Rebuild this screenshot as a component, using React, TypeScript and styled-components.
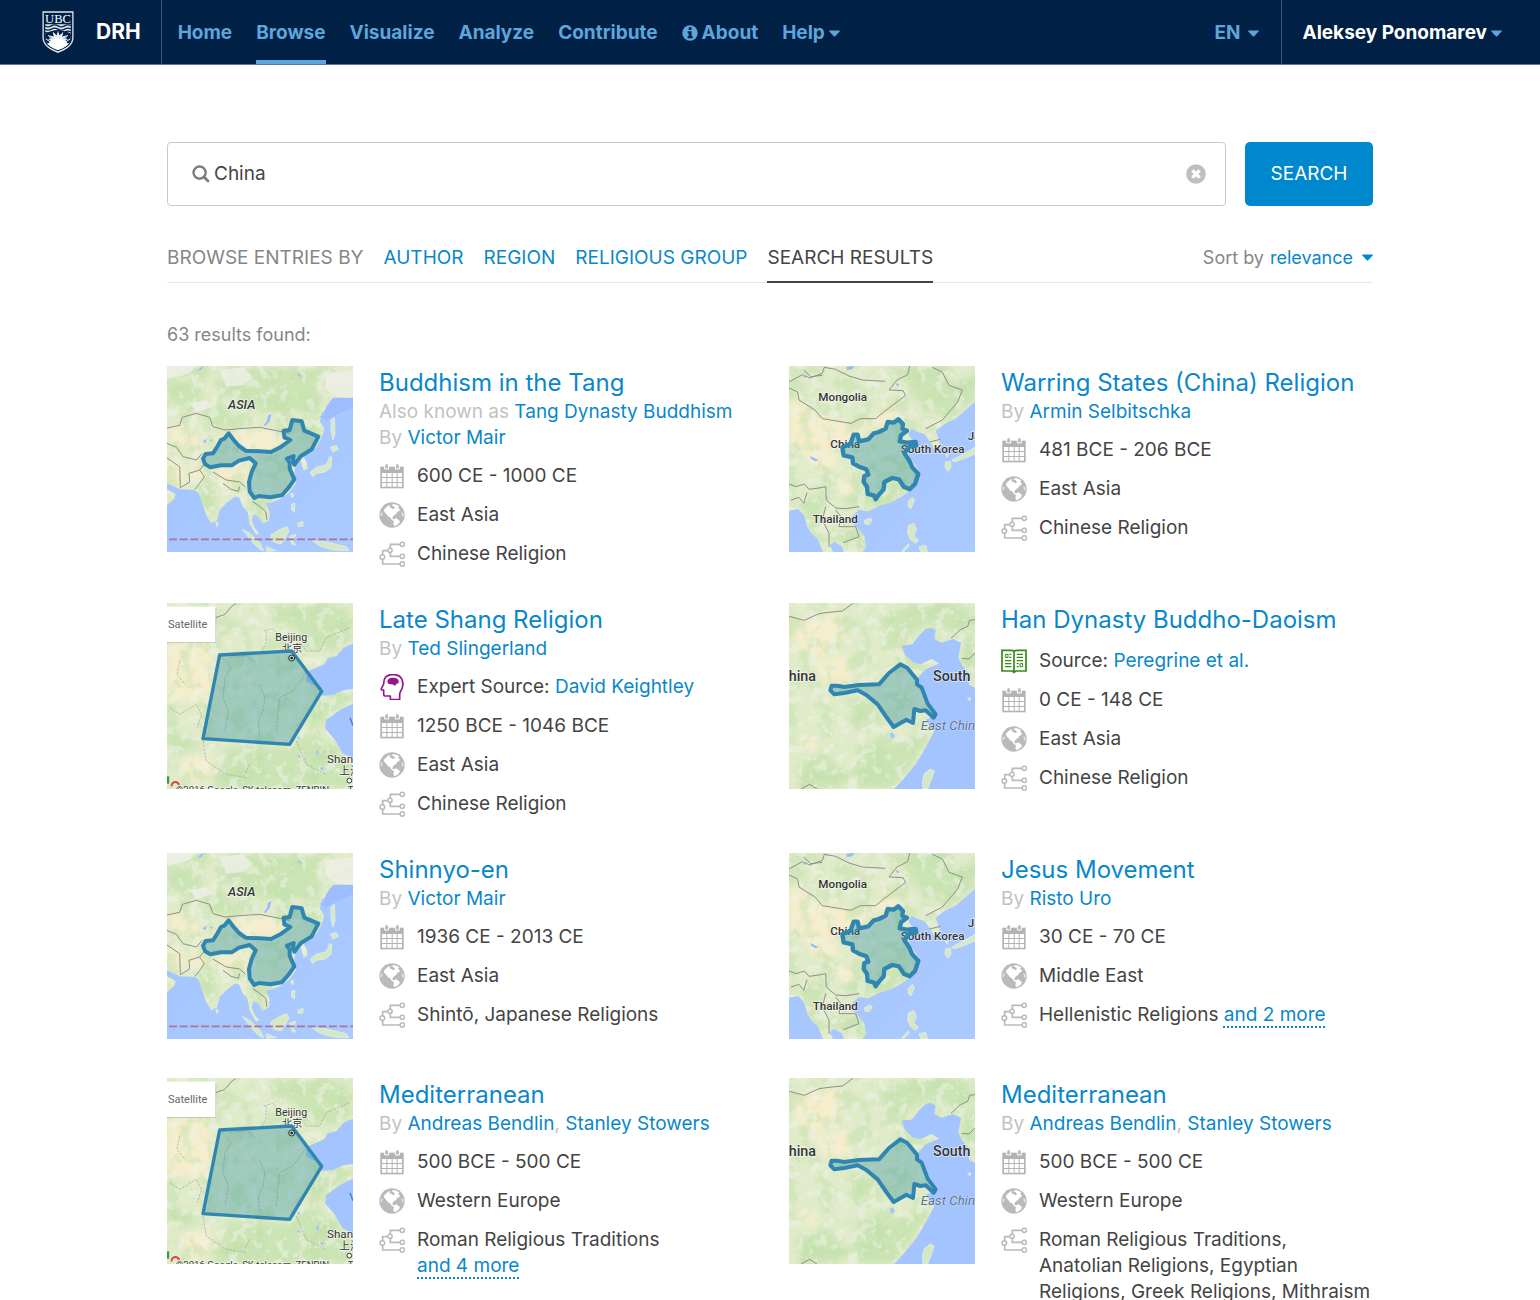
import React, { useId, useState } from "react";
import styled, { createGlobalStyle } from "styled-components";

const c = {
  navy: "#002145",
  sky: "#5ea5dc",
  link: "#0a87ca",
  button: "#0088ce",
  text: "#444444",
  muted: "#868686",
  faint: "#c2c2c2",
  icon: "#bababa",
  line: "#e6e6e6",
};

const GlobalStyle = createGlobalStyle`
  *, *::before, *::after { box-sizing: border-box; }
  body {
    margin: 0;
    background: #fff;
    color: ${c.text};
    font-family: Inter, "Liberation Sans", sans-serif;
    font-size: 19px;
    line-height: 26px;
  }
  a { color: ${c.link}; text-decoration: none; }
  button, input, select { font: inherit; }
  svg { display: block; flex: none; }
`;

/* ---------- header ---------- */

const Header = styled.header`
  display: flex;
  height: 65px;
  background: ${c.navy};
  border-bottom: 1px solid #5f7690;
  font-weight: 700;
`;

const Brand = styled.a`
  display: flex;
  align-items: center;
  gap: 22px;
  padding: 0 20px 0 42px;
  border-right: 1px solid #2a5a86;
  color: #fff;
  font-size: 21px;
`;

const Nav = styled.nav`
  display: flex;
  gap: 24px;
  padding-left: 16px;
`;

const NavLink = styled.a<{ $active?: boolean }>`
  display: flex;
  align-items: center;
  gap: 4px;
  padding-top: 6px;
  border-bottom: 4px solid ${(p) => (p.$active ? c.sky : "transparent")};
  color: ${c.sky};
`;

const MenuButton = styled.button<{ $light?: boolean }>`
  display: flex;
  align-items: center;
  gap: 4px;
  padding: 2px 0 0;
  border: 0;
  background: none;
  color: ${(p) => (p.$light ? "#fff" : c.sky)};
  cursor: pointer;
`;

const HeaderEnd = styled.div`
  display: flex;
  margin-left: auto;
`;

const Language = styled.label`
  display: flex;
  align-items: center;
  gap: 8px;
  padding: 2px 22px 0 0;
  color: ${c.sky};
`;

const Account = styled.div`
  display: flex;
  padding: 0 38px 0 20px;
  border-left: 1px solid #2a5a86;
`;

const PlainSelect = styled.select`
  appearance: none;
  field-sizing: content;
  padding: 0;
  border: 0;
  background: none;
  color: inherit;
  cursor: pointer;
`;

/* ---------- search and tabs ---------- */

const Page = styled.main`
  max-width: 1246px;
  margin: 0 auto;
  padding: 77px 20px 0;
`;

const SearchForm = styled.form`
  display: flex;
  gap: 19px;
`;

const SearchBox = styled.div`
  display: flex;
  flex: 1;
  align-items: center;
  gap: 4px;
  height: 64px;
  padding: 0 19px 0 24px;
  border: 1px solid #c9c9c9;
  border-radius: 4px;
`;

const SearchInput = styled.input`
  flex: 1;
  min-width: 0;
  padding: 0;
  border: 0;
  outline: 0;
  background: none;
  color: ${c.text};
`;

const ClearButton = styled.button`
  padding: 0;
  border: 0;
  background: none;
  cursor: pointer;
`;

const SearchButton = styled.button`
  width: 128px;
  border: 0;
  border-radius: 5px;
  background: ${c.button};
  color: #fff;
  cursor: pointer;
`;

const Tabs = styled.nav`
  display: flex;
  gap: 20px;
  height: 51px;
  margin-top: 26px;
  box-shadow: inset 0 -1px ${c.line};
  color: ${c.muted};
  line-height: 51px;
  text-transform: uppercase;
`;

const Tab = styled.a<{ $active?: boolean }>`
  color: ${(p) => (p.$active ? c.text : c.link)};
  box-shadow: ${(p) => (p.$active ? `inset 0 -2px ${c.text}` : "none")};
`;

const Sort = styled.label`
  display: flex;
  align-items: center;
  gap: 6px;
  margin-left: auto;
  color: ${c.muted};
  font-size: 18px;
  text-transform: none;
`;

const SortValue = styled.span`
  display: flex;
  align-items: center;
  gap: 9px;
  color: ${c.link};
`;

/* ---------- results ---------- */

const Count = styled.p`
  margin: 39px 0 18px;
  color: ${c.muted};
  font-size: 18px;
`;

const Results = styled.div`
  display: grid;
  grid-template-columns: repeat(2, minmax(0, 1fr));
  gap: 36px 38px;
`;

const Entry = styled.article`
  display: grid;
  grid-template-columns: 186px minmax(0, 1fr);
  align-items: start;
  gap: 26px;
  min-height: 189px;
`;

const Title = styled.h2`
  margin: 0;
  font-size: 24px;
  font-weight: 400;
  line-height: 33px;
`;

const Byline = styled.p`
  margin: 0;
  color: ${c.faint};
`;

const Facts = styled.ul`
  display: grid;
  gap: 13px;
  margin: 12px 0 0;
  padding: 0;
  list-style: none;
`;

const Fact = styled.li`
  display: flex;
  gap: 12px;
`;

const More = styled.a`
  text-decoration: underline dotted 2px;
  text-underline-offset: 5px;
  white-space: nowrap;
`;

/* ---------- icons ---------- */

const Caret = ({ color = c.sky }: { color?: string }) => (
  <svg width="11" height="7" viewBox="0 0 11 7" aria-hidden="true">
    <path d="M0.6 0.4H10.4Q11.2 0.6 10.6 1.4L6.2 6.2Q5.5 6.9 4.8 6.2L0.4 1.4Q-0.2 0.6 0.6 0.4Z" fill={color} />
  </svg>
);

const Shield = () => (
  <svg width="32" height="42" viewBox="126 35 96 127" aria-hidden="true">
    <path d="M127 36H221V117C221 139 197 154 174 162C151 154 127 139 127 117Z" fill="#dfe6ee" />
    <path d="M131 40H217V117C217 137 195 150 174 157C153 150 131 137 131 117Z" fill={c.navy} />
    <path d="M135 75H213V117C213 134 193 147 174 153C155 147 135 134 135 117Z" fill="#dfe6ee" />
    <text x="174" y="71" textAnchor="middle" fontFamily="Liberation Serif, serif" fontWeight="400" fontSize="38" fill="#fff">UBC</text>
    <g fill="none" stroke={c.navy} strokeWidth="4">
      <path d="M134 80Q144 86 154 80T174 80T194 80T214 80" />
      <path d="M134 90Q144 96 154 90T174 90T194 90T214 90" />
      <path d="M134 99Q144 105 154 99T174 99T194 99T214 99" />
    </g>
    <path d="M135 103L148 98L174 92L200 98L213 103V124L204 136L197 124L205 120L193 118L201 108L186 112L188 99L178 108L174 97L170 108L160 99L162 112L147 108L155 118L143 120L151 124L144 136L135 124Z" fill={c.navy} />
    <g stroke="#fff" strokeWidth="3" strokeLinecap="round">
      <path d="M174 124V98M167 124L160 101M181 124L188 101M160 127L145 109M188 127L203 109M156 132L138 120M192 132L210 120" />
    </g>
    <path d="M140 132Q150 134 154 124Q160 127 163 118Q170 122 174 115Q178 122 185 118Q188 127 194 124Q198 134 208 132Q198 146 174 153Q150 146 140 132Z" fill="#fff" />
  </svg>
);

const InfoIcon = () => (
  <svg width="16" height="16" viewBox="0 0 16 16" aria-hidden="true">
    <circle cx="8" cy="8" r="7.7" fill={c.sky} />
    <path d="M6.7 2.3H9.5V4.9H6.7ZM5.6 6.2H9.6V11.2H10.7V13.2H5.6V11.2H6.7V8.2H5.6Z" fill={c.navy} />
  </svg>
);

const SearchIcon = () => (
  <svg width="18" height="18" viewBox="0 0 18 18" fill="none" stroke="#7c7c7c" strokeWidth="2.4" aria-hidden="true">
    <circle cx="7.6" cy="7.6" r="6.1" />
    <path d="M12 12L16 16" strokeLinecap="round" strokeWidth="2.8" />
  </svg>
);

const ClearIcon = () => (
  <svg width="20" height="20" viewBox="0 0 20 20" aria-hidden="true">
    <circle cx="10" cy="10" r="9.8" fill="#bfbfbf" />
    <path d="M6.4 6.4L13.6 13.6M13.6 6.4L6.4 13.6" stroke="#fff" strokeWidth="3.4" />
  </svg>
);

type IconName = "date" | "region" | "group" | "expert" | "book";

const drawings: Record<IconName, React.ReactNode> = {
  date: (
    <g>
      <path d="M4 11H74V76H4Z" fill="#b3b3b3" />
      <path d="M9 30H22V42H9ZM25 30H38V42H25ZM41 30H53V42H41ZM56 30H69V42H56ZM9 45H22V57H9ZM25 45H38V57H25ZM41 45H53V57H41ZM56 45H69V57H56ZM9 60H22V71H9ZM25 60H38V71H25ZM41 60H53V71H41ZM56 60H69V71H56Z" fill="#fff" />
      <path d="M17 18V9Q17 2 23 2T29 9V18ZM49 18V9Q49 2 55 2T61 9V18Z" fill={c.icon} stroke="#fff" strokeWidth="3" />
    </g>
  ),
  region: (
    <g>
      <circle cx="39" cy="39" r="38" fill={c.icon} />
      <path d="M37 10L44 6L52 8L61 13L57 18L63 22L60 28L54 30L52 36L47 38L42 43L40 51L45 52L52 49L58 53L63 58L60 64L54 69L46 73L43 66L45 58L38 53L33 46L27 43L22 36L17 31L14 24L20 18L27 11L33 9L31 16L38 18L43 22L48 18L44 13Z" fill="#fff" />
      <path d="M6 31L11 34L9 41L4 43ZM67 30L73 34L74 44L69 42Z" fill="#fff" opacity=".6" />
    </g>
  ),
  group: (
    <g fill="none" stroke={c.icon} strokeWidth="5">
      <path d="M63 10H34V22M26 29H11V41M34 35V46H63M11 55V69H63" />
      <g fill="#fff" strokeWidth="4.5">
        <circle cx="70" cy="10" r="6.5" />
        <circle cx="33" cy="28" r="6.5" />
        <circle cx="70" cy="46" r="6.5" />
        <circle cx="10" cy="48" r="7" />
        <circle cx="70" cy="69" r="6.5" />
      </g>
    </g>
  ),
  expert: (
    <g>
      <path d="M34 77V66H18Q14 66 14 61V48H8Q6 47 7 44L14 30Q13 2 42 1Q71 2 72 30Q72 41 64 53L62 60V77Z" fill="none" stroke="#93168f" strokeWidth="5" strokeLinejoin="round" />
      <path d="M25 22Q27 11 40 11Q56 10 59 20Q61 29 51 30L49 36Q43 30 34 31Q25 31 25 22Z" fill="#93168f" />
    </g>
  ),
  book: (
    <g fill="none" stroke="#338a12" strokeWidth="5">
      <path d="M39 9Q36 7 30 7H3V69H34L39 73L44 69H75V7H48Q42 7 39 9V71" />
      <path d="M13 19H21V28H13ZM57 47H65V56H57Z" strokeWidth="3" />
      <path d="M25 19H31M25 28H31M12 38H31M12 47H31M12 56H31M47 19H66M47 28H66M47 38H66M47 47H53M47 56H53" strokeWidth="4" />
    </g>
  ),
};

const FactIcon = ({ name }: { name: IconName }) => (
  <svg width="26" height="26" viewBox="0 0 78 78" aria-hidden="true">{drawings[name]}</svg>
);

/* ---------- map thumbnails ---------- */

type MapArt = {
  label: string;
  box: string;
  land: string;
  extraLand?: string;
  water?: string;
  greens: string;
  tans: string;
  borders: string;
  under?: React.ReactNode;
  shape: string;
  width: number;
  over?: React.ReactNode;
};

const mapText = {
  fontFamily: "Roboto, sans-serif",
  fontWeight: 500,
  fontSize: 35,
  fill: "#333",
  stroke: "#fff",
  strokeWidth: 4,
  strokeOpacity: 0.7,
  paintOrder: "stroke",
} as const;

const maps: Record<"asia" | "china" | "north" | "east", MapArt> = {
  asia: {
    label: "Map of Asia",
    box: "22 18 558 558",
    land: "M22 18H580V118L545 112L525 116L510 125L500 145L486 160L480 185L494 205L486 232L470 262L450 275L430 288L440 305L444 325L432 332L424 302L408 314L404 340L408 370L388 398L365 415L335 428L318 430L330 455L328 480L310 492L297 470L282 462L276 480L286 505L298 520L290 524L270 492L264 455L250 440L238 412L225 410L200 430L180 450L172 480L155 490L140 465L128 430L118 400L105 390L60 388L45 380L22 370ZM22 388L48 402L44 416L22 436Z",
    extraLand: "M452 336L470 322L500 314L510 290L516 292L514 322L496 336L470 340L458 350ZM512 262L530 256L536 268L520 276ZM514 180L524 172L526 220L520 240L514 214ZM394 400L402 402L400 412L394 410ZM396 432L406 430L404 456L396 450ZM414 490L430 484L430 498L416 500ZM334 524L362 508L382 500L388 512L376 536L364 552L342 546L334 538ZM248 508L270 520L300 548L312 572L298 566L276 544ZM390 528L410 522L400 540L408 556L396 552ZM458 542L500 546L560 560L568 572L520 570L480 558ZM320 560L350 572L320 574ZM168 486L176 490L172 500Z",
    greens: "M30 80L110 64L130 110L90 150L40 130ZM210 22L320 20L470 30L480 110L470 160L420 150L380 180L330 140L290 150L200 100ZM130 160L200 130L230 190L150 210ZM430 180L480 170L476 240L430 230ZM110 400L160 390L170 440L150 480L130 440ZM270 420L320 420L310 450L280 455ZM60 30L160 22L150 50L80 60Z",
    tans: "M22 270L60 300L80 350L60 386L22 370ZM100 300L150 330L130 365L90 360ZM210 210L300 206L390 220L370 245L330 275L250 270ZM150 330L270 320L260 370L190 368ZM22 200L90 210L130 250L110 270L40 250ZM22 390L44 402L40 416L22 430Z",
    borders: "M22 204L60 196L68 172L110 160L150 172L160 200L196 210L240 206L300 202L350 212L390 220M22 250L50 262L70 290L110 300L128 280M22 294L60 320L62 380M60 384L90 366L88 340L120 330L134 312M120 330L134 350L120 370L106 388M160 336L200 360L240 366L256 380M190 370L214 388L236 394L240 380M278 424L296 436L318 454L322 480",
    under: (
      <g>
        <path d="M22 18H110L90 40L22 56ZM180 30L250 22L280 50L250 76L200 80ZM500 40L580 30V112L520 108L496 80ZM90 130L140 120L160 140L110 156Z" fill="#efefe8" opacity=".8" />
        <path d="M312 196L320 186L326 166L336 162L330 184L318 198ZM112 32L124 22L132 18L126 30ZM128 244L142 236L138 250ZM150 240L160 238L156 246ZM478 170L492 166L500 140L520 114H580V140L500 180ZM414 44L420 40L426 54Z" fill="#9dbdff" />
        <path d="M28 538H580" stroke="#a8779b" strokeWidth="5" strokeDasharray="24 8" />
        <text {...mapText} x="205" y="148" fontSize="38" fontStyle="italic">ASIA</text>
      </g>
    ),
    shape: "M130 296L138 282L160 280L174 258L184 240L194 236L207 220L222 240L238 258L258 272L300 274L334 276L362 262L392 240L374 232L372 212L390 210L398 180L426 184L434 212L476 230L456 268L424 288L404 314L400 300L402 288L382 296L390 308L390 326L404 358L386 384L366 406L332 412L298 408L284 414L270 394L268 366L276 336L288 310L270 294L238 302L216 316L184 316L152 322L136 312Z",
    width: 12,
  },
  china: {
    label: "Map of China and its neighbours",
    box: "30 18 558 558",
    land: "M30 18H588V125L560 150L530 176L500 190L470 212L480 240L485 262L466 268L452 244L436 222L415 215L398 206L388 222L405 250L385 270L392 292L418 330L420 355L402 385L375 405L340 425L300 437L268 454L240 450L222 465L212 482L236 505L256 530L262 560L250 576H195L188 558L165 545L152 556L162 576H132L115 535L100 524L85 500L75 465L58 446L30 452Z",
    extraLand: "M256 482L272 474L280 480L270 494L258 492ZM388 424L400 412L406 420L396 446L388 440ZM388 498L404 490L412 508L404 528L418 540L410 550L394 538L386 518ZM420 560L440 556L446 576H426ZM368 572L388 552L390 558L374 576ZM500 306L514 304L516 322L506 334L498 322ZM518 300L550 284L588 262V282L550 298L524 306ZM500 282L508 284L504 292Z",
    greens: "M330 18L500 18L510 60L550 90L500 130L440 140L400 110L380 60ZM470 110L588 40V120L540 160L490 180ZM180 410L300 380L380 350L412 350L380 400L300 432L220 440ZM60 420L140 400L120 480L110 520L80 470ZM190 500L230 510L250 560L210 570ZM440 190L470 180L460 220ZM30 26L140 20L90 44L40 50Z",
    tans: "M30 110L120 170L220 190L310 160L330 190L240 220L190 260L120 280L30 250ZM60 270L170 280L180 330L110 330ZM300 130L340 120L360 170L320 180ZM170 370L210 350L230 390L190 410Z",
    borders: "M30 66L70 44L92 54L130 40L136 22L170 28L210 48L250 60L318 64M30 84L56 96L60 120L108 150L130 176L216 190L244 176L290 176L314 156L380 106L372 92L330 90L354 60L386 44L392 18M460 22L490 36L510 76L550 90L536 126L490 180L440 206M452 246L484 238M30 372L52 380L76 372L90 388L120 384L140 380L142 420L170 444L200 446L240 440M36 420L60 412L74 430L84 398M140 440L130 480L150 520L150 560M170 450L186 470L180 500L230 500L240 530L192 548M74 30L96 50L130 46",
    under: (
      <g>
        <path d="M202 20L226 18L220 28L204 30ZM70 46L84 46L78 54ZM350 70L360 72L356 80ZM94 288L118 300L110 304L96 296Z" fill="#94b9fa" />
        <text {...mapText} x="118" y="122">Mongolia</text>
        <text {...mapText} x="154" y="263">China</text>
        <text {...mapText} x="365" y="280">South Korea</text>
        <text {...mapText} x="566" y="239">Japan</text>
        <text {...mapText} x="101" y="488">Thailand</text>
      </g>
    ),
    shape: "M190 262L214 252L224 224L236 224L240 244L268 238L284 220L300 216L320 206L326 186L344 188L358 178L372 192L370 206L384 212L366 226L362 244L384 248L410 246L412 256L392 260L376 280L390 300L400 322L418 342L408 372L392 388L374 380L360 358L340 354L316 366L314 388L298 406L290 418L284 406L266 402L264 380L254 366L256 348L268 344L262 328L240 320L222 310L220 292L194 286Z",
    width: 13,
  },
  north: {
    label: "Map of northern China",
    box: "22 16 558 558",
    land: "M22 16H580V574H22Z",
    water: "M580 138L552 150L530 176L505 182L494 200L466 212L440 222L440 252L468 266L488 294L520 292L550 278L580 274ZM580 318L546 334L500 366L496 392L526 426L548 466L580 484ZM466 462L478 458L476 474ZM410 476L420 472L424 482ZM412 420L420 416L420 428ZM480 510L492 508L488 520Z",
    greens: "M340 20L560 30L580 130L520 160L440 140L400 90L340 70ZM520 290L580 284V310L500 350L470 400L440 330ZM200 450L380 450L460 400L540 470L580 500V574H160L190 500ZM22 390L90 420L120 450L60 470L22 450Z",
    tans: "M22 140L160 130L150 200L160 260L110 340L90 300L22 320ZM60 490L150 470L160 540L90 560ZM200 190L240 180L230 240Z",
    borders: "M168 60L196 50L216 26L228 18",
    under: (
      <g>
        <path d="M60 190L52 230L76 260M30 330L60 350L110 320L126 350L112 390M190 180L214 210L196 240L190 300L206 340L196 400M210 180L260 174L290 196M300 260L316 300L310 340L296 370L300 420M350 400L360 300L400 280L430 240L440 220M130 430L140 490L200 530L260 540M270 500L250 540M410 430L440 500L500 530M312 100L340 92L370 130L400 110L440 160L480 160L500 120L570 90M320 100L318 140L300 170" fill="none" stroke="#9aa39a" strokeWidth="1.8" strokeDasharray="8 3" />
        <text {...mapText} x="347" y="129" fontWeight="400" fontSize="32">Beijing</text>
        <text {...mapText} x="366" y="163" fontFamily="Noto Sans CJK SC, sans-serif" fontWeight="400" fontSize="31">北京</text>
      </g>
    ),
    shape: "M180 172L396 160L486 281L390 440L130 423Z",
    width: 10,
    over: (
      <g>
        <circle cx="396" cy="181" r="9" fill="#b8d0c4" stroke="#333" strokeWidth="3" />
        <circle cx="396" cy="181" r="4" fill="#222" />
        <path d="M22 134H168V30" fill="none" stroke="#00000022" strokeWidth="4" />
        <rect x="22" y="27" width="145" height="106" fill="#fff" />
        <text x="25" y="91" fontFamily="Roboto, sans-serif" fontSize="33" fill="#666">Satellite</text>
        <text {...mapText} x="502" y="497" fontWeight="400">Shanghai</text>
        <text {...mapText} x="538" y="531" fontFamily="Noto Sans CJK SC, sans-serif" fontWeight="400" fontSize="33">上海</text>
        <circle cx="569" cy="549" r="7" fill="#fff" stroke="#333" strokeWidth="3" />
        <path d="M571 360L580 384" stroke="#4e79c4" strokeWidth="4" />
        <path d="M25 536V558" stroke="#2c9f4b" strokeWidth="7" />
        <path d="M36 566A11 11 0 1 1 58 562" fill="none" stroke="#e0483e" strokeWidth="6" />
        <text {...mapText} x="48" y="585" fontWeight="400" fontSize="29">©2016 Google, SK telecom, ZENRIN</text>
        <text {...mapText} x="564" y="585" fontWeight="400" fontSize="29">Terms</text>
      </g>
    ),
  },
  east: {
    label: "Map of eastern China",
    box: "30 16 558 558",
    land: "M30 16H588V574H30Z",
    water: "M455 90L470 98L466 124L488 135L522 124L546 135L538 180L548 200L570 230L570 262L588 270V574H345L366 552L410 500L440 450L466 400L440 366L470 355L440 290L412 246L440 215L480 198L458 184L424 200L402 194L378 172L368 144L400 140L420 114L440 94ZM332 408L342 404L348 416L338 424Z",
    extraLand: "M430 550L436 528L454 514L466 520L456 548L446 574H432ZM566 300L576 302L572 310Z",
    greens: "M300 60L400 20L560 20L588 80L520 100L440 80L380 130L320 120ZM546 140L588 90V260L560 210ZM60 500L140 460L200 540L180 574H60ZM230 440L340 440L420 410L450 420L400 500L340 574H250ZM400 190L450 190L420 230ZM200 300L270 310L320 380L240 370Z",
    tans: "M30 70L120 60L190 40L200 110L120 180L60 160ZM100 190L200 170L220 240L140 260ZM360 120L400 110L370 150ZM50 420L130 430L100 470Z",
    borders: "M30 56L76 68L120 48L150 44L190 40L222 17M516 122L544 96L566 86L572 68L588 66M548 182L570 184L588 166M66 574L92 560L114 574",
    under: (
      <g>
        <text {...mapText} x="1" y="249" fontSize="43">China</text>
        <text {...mapText} x="462" y="249" fontSize="43">South</text>
        <text {...mapText} x="425" y="398" fontSize="40" fontWeight="400" fontStyle="italic" fill="#5a7191" strokeWidth="2">East China</text>
      </g>
    ),
    shape: "M158 264L174 264L196 268L240 262L300 260L330 226L364 200L384 210L414 246L414 260L428 270L446 318L470 350L464 360L440 338L424 340L406 334L402 376L382 366L344 388L322 358L296 320L262 292L236 278L196 286L166 290L154 278Z",
    width: 12,
  },
};

const MapThumb = ({ map }: { map: keyof typeof maps }) => {
  const id = useId().replace(/[^a-zA-Z0-9]/g, "");
  const m = maps[map];
  const [x, y, w, h] = m.box.split(" ").map(Number);
  const area = { x, y, width: w, height: h };
  return (
    <svg width="186" height="186" viewBox={m.box} role="img" aria-label={m.label}>
      <defs>
        <clipPath id={`${id}land`}>
          <path d={m.land} />
        </clipPath>
        <filter id={`${id}pale`} x="0" y="0" width="100%" height="100%" colorInterpolationFilters="sRGB">
          <feTurbulence type="fractalNoise" baseFrequency="0.034" numOctaves="4" seed="7" />
          <feColorMatrix values="0 0 0 0 0.94  0 0 0 0 0.95  0 0 0 0 0.91  0 8 0 0 -4.3" />
        </filter>
        <filter id={`${id}green`} x="0" y="0" width="100%" height="100%" colorInterpolationFilters="sRGB">
          <feTurbulence type="fractalNoise" baseFrequency="0.018" numOctaves="4" seed="3" />
          <feColorMatrix values="0 0 0 0 0.75  0 0 0 0 0.88  0 0 0 0 0.66  6 0 0 0 -3" />
        </filter>
        <filter id={`${id}soft`} x="-10%" y="-10%" width="120%" height="120%" colorInterpolationFilters="sRGB">
          <feGaussianBlur stdDeviation="10" />
        </filter>
        <linearGradient id={`${id}sea`} x1="0" y1="0" x2="1" y2="1">
          <stop offset="0" stopColor="#a3c3ff" />
          <stop offset="1" stopColor="#abcaff" />
        </linearGradient>
      </defs>
      <rect {...area} fill={`url(#${id}sea)`} />
      <g clipPath={`url(#${id}land)`}>
        <rect {...area} fill="#e0ebc9" />
        <g filter={`url(#${id}soft)`}>
          <path d={m.greens} fill="#cbe4b4" />
          <path d={m.tans} fill="#f5edcb" />
        </g>
        <rect {...area} filter={`url(#${id}green)`} opacity=".45" />
        <rect {...area} filter={`url(#${id}pale)`} opacity=".5" />
      </g>
      {m.water && <path d={m.water} fill="#a3c4ff" />}
      {m.extraLand && <path d={m.extraLand} fill="#d3e8c3" stroke="#eef3e6" strokeWidth="2" />}
      <path d={m.borders} fill="none" stroke="#8f9088" strokeWidth="3" strokeLinejoin="round" />
      {m.under}
      <path d={m.shape} fill="#2c8c9e" fillOpacity=".36" stroke="#3086b1" strokeWidth={m.width} strokeLinejoin="round" />
      {m.over}
    </svg>
  );
};

/* ---------- data ---------- */

type EntryData = {
  title: string;
  map: keyof typeof maps;
  aka?: string;
  authors?: string[];
  expert?: string;
  source?: string;
  date: string;
  region: string;
  group: string;
  more?: string;
};

const entries: EntryData[] = [
  { title: "Buddhism in the Tang", map: "asia", aka: "Tang Dynasty Buddhism", authors: ["Victor Mair"], date: "600 CE - 1000 CE", region: "East Asia", group: "Chinese Religion" },
  { title: "Warring States (China) Religion", map: "china", authors: ["Armin Selbitschka"], date: "481 BCE - 206 BCE", region: "East Asia", group: "Chinese Religion" },
  { title: "Late Shang Religion", map: "north", authors: ["Ted Slingerland"], expert: "David Keightley", date: "1250 BCE - 1046 BCE", region: "East Asia", group: "Chinese Religion" },
  { title: "Han Dynasty Buddho-Daoism", map: "east", source: "Peregrine et al.", date: "0 CE - 148 CE", region: "East Asia", group: "Chinese Religion" },
  { title: "Shinnyo-en", map: "asia", authors: ["Victor Mair"], date: "1936 CE - 2013 CE", region: "East Asia", group: "Shintō, Japanese Religions" },
  { title: "Jesus Movement", map: "china", authors: ["Risto Uro"], date: "30 CE - 70 CE", region: "Middle East", group: "Hellenistic Religions", more: "and 2 more" },
  { title: "Mediterranean", map: "north", authors: ["Andreas Bendlin", "Stanley Stowers"], date: "500 BCE - 500 CE", region: "Western Europe", group: "Roman Religious Traditions", more: "and 4 more" },
  { title: "Mediterranean", map: "east", authors: ["Andreas Bendlin", "Stanley Stowers"], date: "500 BCE - 500 CE", region: "Western Europe", group: "Roman Religious Traditions, Anatolian Religions, Egyptian Religions, Greek Religions, Mithraism" },
];

const EntryCard = ({ entry }: { entry: EntryData }) => (
  <Entry>
    <MapThumb map={entry.map} />
    <div>
      <Title><a href="#entry">{entry.title}</a></Title>
      {entry.aka && <Byline>Also known as <a href="#entry">{entry.aka}</a></Byline>}
      {entry.authors && (
        <Byline>
          By{" "}
          {entry.authors.map((name, i) => (
            <React.Fragment key={name}>
              {i > 0 && ", "}
              <a href="#author">{name}</a>
            </React.Fragment>
          ))}
        </Byline>
      )}
      <Facts>
        {entry.expert && (
          <Fact><FactIcon name="expert" /><span>Expert Source: <a href="#source">{entry.expert}</a></span></Fact>
        )}
        {entry.source && (
          <Fact><FactIcon name="book" /><span>Source: <a href="#source">{entry.source}</a></span></Fact>
        )}
        <Fact><FactIcon name="date" /><span>{entry.date}</span></Fact>
        <Fact><FactIcon name="region" /><span>{entry.region}</span></Fact>
        <Fact>
          <FactIcon name="group" />
          <span>{entry.group}{entry.more && <> <More href="#more">{entry.more}</More></>}</span>
        </Fact>
      </Facts>
    </div>
  </Entry>
);

export default function App() {
  const [query, setQuery] = useState("China");
  return (
    <>
      <GlobalStyle />
      <Header>
        <Brand href="#top"><Shield />DRH</Brand>
        <Nav aria-label="Main">
          <NavLink href="#home">Home</NavLink>
          <NavLink href="#browse" $active aria-current="page">Browse</NavLink>
          <NavLink href="#visualize">Visualize</NavLink>
          <NavLink href="#analyze">Analyze</NavLink>
          <NavLink href="#contribute">Contribute</NavLink>
          <NavLink href="#about"><InfoIcon />About</NavLink>
          <MenuButton type="button">Help<Caret /></MenuButton>
        </Nav>
        <HeaderEnd>
          <Language>
            <PlainSelect aria-label="Language" defaultValue="EN"><option>EN</option></PlainSelect>
            <Caret />
          </Language>
          <Account>
            <MenuButton type="button" $light>Aleksey Ponomarev<Caret /></MenuButton>
          </Account>
        </HeaderEnd>
      </Header>
      <Page>
        <SearchForm role="search" onSubmit={(e) => e.preventDefault()}>
          <SearchBox>
            <SearchIcon />
            <SearchInput aria-label="Search entries" value={query} onChange={(e) => setQuery(e.target.value)} />
            <ClearButton type="button" aria-label="Clear search" onClick={() => setQuery("")}><ClearIcon /></ClearButton>
          </SearchBox>
          <SearchButton type="submit">SEARCH</SearchButton>
        </SearchForm>
        <Tabs aria-label="Browse entries by">
          <span>Browse entries by</span>
          <Tab href="#author">Author</Tab>
          <Tab href="#region">Region</Tab>
          <Tab href="#group">Religious group</Tab>
          <Tab href="#results" $active aria-current="page">Search results</Tab>
          <Sort>
            Sort by
            <SortValue>
              <PlainSelect defaultValue="relevance"><option>relevance</option></PlainSelect>
              <Caret color={c.button} />
            </SortValue>
          </Sort>
        </Tabs>
        <Count>63 results found:</Count>
        <Results>
          {entries.map((entry, i) => <EntryCard key={i} entry={entry} />)}
        </Results>
      </Page>
    </>
  );
}
